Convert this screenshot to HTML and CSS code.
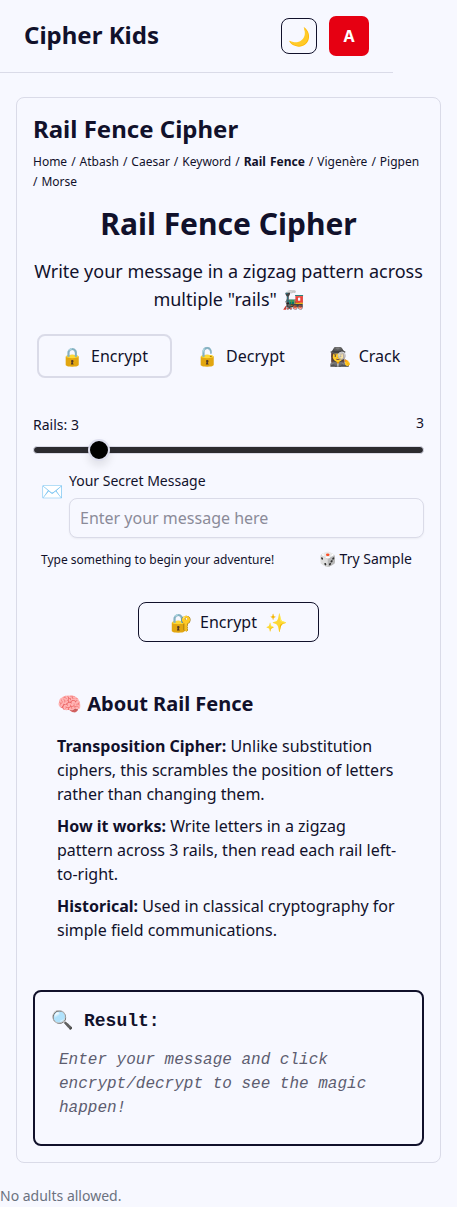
FILE: index.html
```html
<!DOCTYPE html>
<html lang="en">
<head>
<meta charset="utf-8">
<title>Cipher Kids</title>
<link rel="stylesheet" href="styles.css">
</head>
<body>
<header class="topbar">
  <div class="brand">Cipher Kids</div>
  <div class="actions"><button class="theme">🌙</button><div class="avatar">A</div></div>
</header>
<main class="card">
  <h2 class="card-title">Rail Fence Cipher</h2>
  <nav class="crumbs">Home / Atbash / Caesar / Keyword / <b>Rail Fence</b> / Vigenère / Pigpen / Morse</nav>
  <h1 class="title">Rail Fence Cipher</h1>
  <p class="lead">Write your message in a zigzag pattern across multiple "rails" 🚂</p>
  <div class="tabs">
    <button class="tab active"><span>🔒</span><span>Encrypt</span></button>
    <button class="tab"><span>🔓</span><span>Decrypt</span></button>
    <button class="tab"><span>🕵️‍♀️</span><span>Crack</span></button>
  </div>
  <div class="rails"><span>Rails: 3</span><span class="rails-value">3</span></div>
  <div class="track"><div class="thumb"></div></div>
  <div class="message">
    <span class="envelope">✉️</span>
    <div class="field"><label for="msg">Your Secret Message</label><input id="msg" placeholder="Enter your message here"></div>
  </div>
  <div class="hint"><span class="hint-text">Type something to begin your adventure!</span><button class="sample">🎲 Try Sample</button></div>
  <button class="submit"><span>🔐</span><span>Encrypt</span><span>✨</span></button>
  <section class="about">
    <h3>🧠 About Rail Fence</h3>
    <p><b>Transposition Cipher:</b> Unlike substitution ciphers, this scrambles the position of letters rather than changing them.</p>
    <p><b>How it works:</b> Write letters in a zigzag pattern across 3 rails, then read each rail left-to-right.</p>
    <p><b>Historical:</b> Used in classical cryptography for simple field communications.</p>
  </section>
  <section class="result">
    <h3><span>🔍</span><span>Result:</span></h3>
    <p>Enter your message and click encrypt/decrypt to see the magic happen!</p>
  </section>
</main>
<footer class="footer">No adults allowed.</footer>
</body>
</html>
```
FILE: styles.css
```css
* { box-sizing: border-box; margin: 0; }
body { background: #f7f8ff; color: #11112b; font: 16px/24px "Noto Sans", sans-serif; overflow: hidden; }
button { font: inherit; color: inherit; background: none; border: 0; padding: 0; }
.topbar { width: 393px; height: 73px; padding: 0 24px; border-bottom: 1px solid #dadbe8; display: flex; align-items: center; justify-content: space-between; }
.brand { font-size: 24px; line-height: 32px; font-weight: 700; padding-bottom: 2px; }
.actions { display: flex; align-items: center; gap: 12px; }
.theme { width: 36px; height: 36px; border: 1px solid #11112b; border-radius: 8px; font-size: 18px; line-height: 28px; }
.avatar { width: 40px; height: 40px; border-radius: 7px; background: #e60012; color: #fff; font-weight: 700; line-height: 40px; text-align: center; }
.card { margin: 24px 16px 0; width: 425px; height: 1066px; border: 1px solid #dadbe8; border-radius: 8px; padding: 15px 16px 16px; }
.card-title { font-size: 24px; line-height: 32px; }
.crumbs { margin-top: 7px; font-size: 12px; line-height: 20px; word-spacing: 0.88px; }
.title { margin-top: 14px; font-size: 30px; line-height: 36px; text-align: center; }
.lead { margin-top: 15px; font-size: 18px; line-height: 28px; text-align: center; }
.tabs { margin: 21px 4px 0; display: grid; grid-template-columns: 135px 135px 1fr; gap: 1px; }
.tab { height: 44px; border: 2px solid transparent; border-radius: 8px; display: flex; align-items: center; justify-content: center; gap: 8px; }
.tab span:first-child { font-size: 18px; }
.tab.active { border-color: #dadbe8; }
.rails { margin-top: 35px; display: flex; justify-content: space-between; font-size: 14px; line-height: 24px; }
.rails-value { line-height: 20px; }
.track { margin-top: 9px; height: 8px; border: 1px solid #dadbe8; border-radius: 4px; background: #2b2b30; position: relative; }
.thumb { position: absolute; left: 54px; top: -8px; width: 22px; height: 22px; border: 2px solid #dddeee; border-radius: 50%; background: #000; box-shadow: 0 5px 8px #00000018; }
.message { margin-top: 15px; display: flex; padding-left: 8px; }
.envelope { width: 28px; font-size: 18px; line-height: 44px; }
.field { flex: 1; font-size: 14px; line-height: 24px; }
.field label { display: block; }
.field input { display: block; margin-top: 5px; width: 100%; height: 40px; padding: 0 10px; border: 1px solid #dadbe8; border-radius: 8px; background: #f7f8ff; font: 16px "Noto Sans", sans-serif; box-shadow: 0 1px 2px #0000000d; }
.field input::placeholder { color: #8b8b99; }
.hint { margin-top: 9px; height: 24px; padding: 0 12px 0 8px; display: flex; align-items: center; justify-content: space-between; font-size: 12px; }
.hint-text { padding-top: 2px; }
.sample { font-size: 14px; }
.submit { margin: 31px auto 0; width: 181px; height: 40px; border: 1px solid #11112b; border-radius: 8px; display: flex; align-items: center; justify-content: center; gap: 8px; }
.submit span:nth-child(odd) { font-size: 18px; }
.about { margin-top: 48px; padding: 0 24px; }
.about h3 { font-size: 20px; line-height: 28px; margin-bottom: 16px; }
.about p { margin-bottom: 8px; }
.result { margin-top: 48px; height: 156px; border: 2px solid #11112b; border-radius: 8px; padding: 17px 16px 16px; font-family: "Liberation Mono", monospace; }
.result h3 { display: flex; gap: 11px; font-size: 18px; line-height: 24px; }
.result p { margin: 15px 8px 0; font-style: italic; color: #5d5d70; }
.footer { margin-top: 21px; font-size: 14px; color: #6b7280; }
```
